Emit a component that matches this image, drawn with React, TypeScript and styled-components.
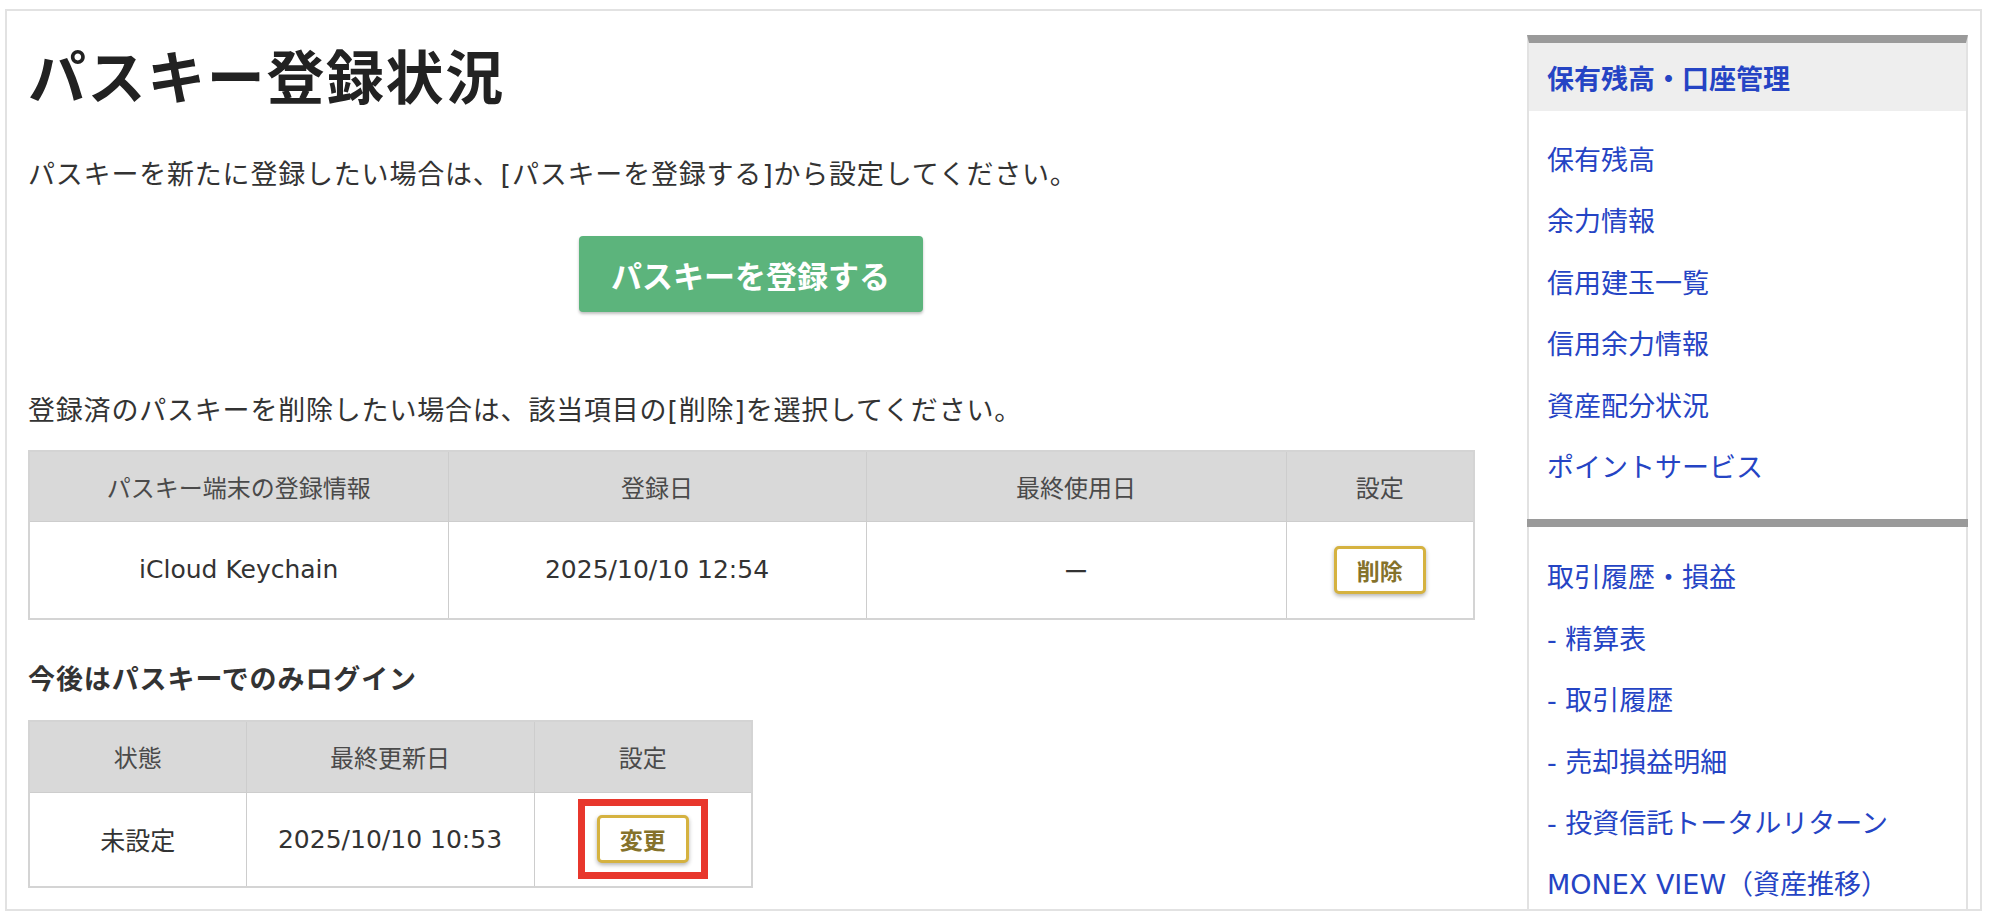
import React from "react";
import styled, { createGlobalStyle } from "styled-components";

const GlobalStyle = createGlobalStyle`
  html, body { margin: 0; padding: 0; background: #ffffff; }
  body {
    font-family: "DejaVu Sans", "Noto Sans CJK JP", sans-serif;
    color: #333333;
  }
  * { box-sizing: border-box; }
`;

const Frame = styled.div`
  margin: 9px 0 0 5px;
  width: 1977px;
  height: 902px;
  border: 2px solid #e2e2e2;
  overflow: hidden;
  display: flex;
  align-items: flex-start;
  padding: 24px 12px 0 21px;
`;

const Main = styled.main`
  width: 1445px;
  flex: none;
  display: flex;
  flex-direction: column;
`;

const Title = styled.h1`
  margin: 0;
  font-family: "Noto Sans CJK JP", sans-serif;
  font-size: 58px;
  line-height: 78px;
  font-weight: 700;
  color: #222;
  letter-spacing: 1.6px;
`;

const Lead = styled.p<{ $top: number }>`
  margin: ${(p) => p.$top}px 0 0;
  font-size: 27px;
  line-height: 40px;
  color: #333;
  letter-spacing: 0.8px;
`;

const ButtonRow = styled.div`
  display: flex;
  justify-content: center;
  margin-top: 41px;
`;

const GreenButton = styled.button`
  width: 344px;
  height: 76px;
  border: none;
  border-radius: 4px;
  background: #5cb47c;
  color: #ffffff;
  font-family: "Noto Sans CJK JP", sans-serif;
  font-size: 31px;
  font-weight: 700;
  box-shadow: 0 2px 3px rgba(0, 0, 0, 0.25);
  cursor: pointer;
`;

const Heading = styled.h2`
  margin: 38px 0 0;
  font-family: "Noto Sans CJK JP", sans-serif;
  font-size: 27px;
  line-height: 40px;
  font-weight: 700;
  color: #333;
  letter-spacing: 0.9px;
`;

const Table = styled.table<{ $top: number; $width: number }>`
  margin-top: ${(p) => p.$top}px;
  width: ${(p) => p.$width}px;
  border-collapse: collapse;
  table-layout: fixed;
  border: 2px solid #d4d4d4;
`;

const Th = styled.th<{ $h: number }>`
  height: ${(p) => p.$h}px;
  background: #d9d9d9;
  border: 1px solid #cdcdcd;
  font-family: "Noto Sans CJK JP", sans-serif;
  font-size: 24px;
  font-weight: 400;
  color: #4a4a4a;
  text-align: center;
  vertical-align: middle;
  padding: 0;
`;

const Td = styled.td<{ $h: number }>`
  height: ${(p) => p.$h}px;
  background: #ffffff;
  border: 1px solid #cdcdcd;
  font-size: 25px;
  color: #333;
  text-align: center;
  vertical-align: middle;
  padding: 0;
`;

const GoldButton = styled.button`
  width: 92px;
  height: 48px;
  border: 3px solid #d5b240;
  border-radius: 5px;
  background: #ffffff;
  color: #85722b;
  font-family: "Noto Sans CJK JP", sans-serif;
  font-size: 23px;
  font-weight: 700;
  box-shadow: 0 2px 4px rgba(0, 0, 0, 0.3);
  cursor: pointer;
  padding: 0;
`;

const Highlight = styled.span`
  display: inline-flex;
  align-items: center;
  justify-content: center;
  width: 130px;
  height: 80px;
  border: 7px solid #e8372c;
`;

const Side = styled.aside`
  margin-left: 54px;
  width: 441px;
  flex: none;
  min-height: 900px;
  border-left: 2px solid #e2e2e2;
  border-right: 2px solid #e2e2e2;
  border-top: 8px solid #9a9a9a;
`;

const SideHeader = styled.div`
  height: 68px;
  background: #eeeeee;
  display: flex;
  align-items: center;
  padding-left: 18px;
  font-family: "Noto Sans CJK JP", sans-serif;
  font-size: 27px;
  font-weight: 700;
  color: #2544c4;
`;

const LinkList = styled.ul<{ $top: number; $bottom: number }>`
  list-style: none;
  margin: 0;
  padding: ${(p) => p.$top}px 0 ${(p) => p.$bottom}px 18px;
`;

const LinkItem = styled.li`
  height: 61.4px;
  line-height: 62px;
  font-size: 27px;
  color: #2544c4;
  white-space: nowrap;
`;

const Divider = styled.div`
  height: 8px;
  background: #9a9a9a;
  margin: 0 -2px;
`;

const links1 = ["保有残高", "余力情報", "信用建玉一覧", "信用余力情報", "資産配分状況", "ポイントサービス"];
const links2 = [
  "取引履歴・損益",
  "- 精算表",
  "- 取引履歴",
  "- 売却損益明細",
  "- 投資信託トータルリターン",
  "MONEX VIEW（資産推移）",
];

export default function App() {
  return (
    <>
      <GlobalStyle />
      <Frame>
        <Main>
          <Title>パスキー登録状況</Title>
          <Lead $top={42}>パスキーを新たに登録したい場合は、[パスキーを登録する]から設定してください。</Lead>
          <ButtonRow>
            <GreenButton>パスキーを登録する</GreenButton>
          </ButtonRow>
          <Lead $top={79}>登録済のパスキーを削除したい場合は、該当項目の[削除]を選択してください。</Lead>
          <Table $top={19} $width={1445}>
            <colgroup>
              <col style={{ width: 419 }} />
              <col style={{ width: 418 }} />
              <col style={{ width: 420 }} />
              <col style={{ width: 188 }} />
            </colgroup>
            <thead>
              <tr>
                <Th $h={70}>パスキー端末の登録情報</Th>
                <Th $h={70}>登録日</Th>
                <Th $h={70}>最終使用日</Th>
                <Th $h={70}>設定</Th>
              </tr>
            </thead>
            <tbody>
              <tr>
                <Td $h={98}>iCloud Keychain</Td>
                <Td $h={98}>2025/10/10 12:54</Td>
                <Td $h={98}>ー</Td>
                <Td $h={98}>
                  <GoldButton>削除</GoldButton>
                </Td>
              </tr>
            </tbody>
          </Table>
          <Heading>今後はパスキーでのみログイン</Heading>
          <Table $top={22} $width={723}>
            <colgroup>
              <col style={{ width: 217 }} />
              <col style={{ width: 288 }} />
              <col style={{ width: 218 }} />
            </colgroup>
            <thead>
              <tr>
                <Th $h={71}>状態</Th>
                <Th $h={71}>最終更新日</Th>
                <Th $h={71}>設定</Th>
              </tr>
            </thead>
            <tbody>
              <tr>
                <Td $h={95}>未設定</Td>
                <Td $h={95}>2025/10/10 10:53</Td>
                <Td $h={95}>
                  <Highlight>
                    <GoldButton>変更</GoldButton>
                  </Highlight>
                </Td>
              </tr>
            </tbody>
          </Table>
        </Main>
        <Side>
          <SideHeader>保有残高・口座管理</SideHeader>
          <LinkList $top={19} $bottom={21}>
            {links1.map((l) => (
              <LinkItem key={l}>{l}</LinkItem>
            ))}
          </LinkList>
          <Divider />
          <LinkList $top={20} $bottom={0}>
            {links2.map((l) => (
              <LinkItem key={l}>{l}</LinkItem>
            ))}
          </LinkList>
        </Side>
      </Frame>
    </>
  );
}
